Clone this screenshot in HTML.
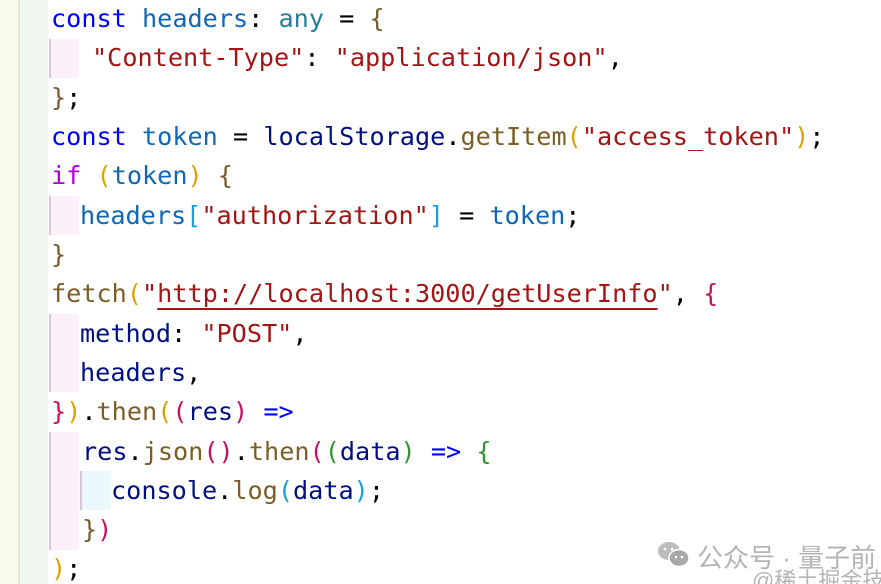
<!DOCTYPE html>
<html><head><meta charset="utf-8"><style>
html,body{margin:0;width:881px;height:584px;overflow:hidden;}
body{background:#fff;position:relative;font-family:"DejaVu Sans Mono","Liberation Mono",monospace;}
.ys{position:absolute;left:0;top:0;width:18px;height:584px;background:#fbfbeb}
.gs{position:absolute;left:18px;top:0;width:2px;height:584px;background:#dfe6da}
.gr{position:absolute;left:20px;top:0;width:28px;height:584px;background:#f0f8ef}
.box{position:absolute;border-left:2px solid #d6c6d6}
.l{position:absolute;left:51px;font-size:25.2px;line-height:39px;white-space:pre;color:#000;letter-spacing:0}
.k{color:#0000ff}.v{color:#0f67b5}.t{color:#267f99}.s{color:#a31515}.b{color:#7a5a2a}.n{color:#001080}.f{color:#795e26}.p{color:#af00db}.y{color:#e0a000}.m{color:#c8105e}.g{color:#319331}.c{color:#18a0e0}
.u{text-decoration:underline;text-decoration-color:#a31515;text-underline-offset:6px}
.wm{position:absolute;font-family:"Liberation Sans","Noto Sans CJK SC",sans-serif;color:#b4b4b4;white-space:nowrap}
</style></head><body>
<div class="ys"></div><div class="gs"></div><div class="gr"></div>
<div class="box" style="left:49px;top:39px;width:28px;height:39px;background:#fcf0fa"></div>
<div class="box" style="left:49px;top:196px;width:28px;height:39px;background:#fcf0fa"></div>
<div class="box" style="left:49px;top:314px;width:28px;height:78px;background:#fcf0fa"></div>
<div class="box" style="left:49px;top:432px;width:28px;height:118px;background:#fcf0fa"></div>
<div class="box" style="left:80px;top:471px;width:29px;height:39px;background:#eaf8fb"></div>
<div class="l" style="top:-1px"><span class="k">const</span> <span class="v">headers</span>: <span class="t">any</span> = <span class="b">{</span></div>
<div class="l" style="top:38px;left:92px"><span class="s">"Content-Type"</span>: <span class="s">"application/json"</span>,</div>
<div class="l" style="top:78px"><span class="b">}</span>;</div>
<div class="l" style="top:117px"><span class="k">const</span> <span class="v">token</span> = <span class="n">localStorage</span>.<span class="f">getItem</span><span class="y">(</span><span class="s">"access_token"</span><span class="y">)</span>;</div>
<div class="l" style="top:156px"><span class="p">if</span> <span class="y">(</span><span class="v">token</span><span class="y">)</span> <span class="b">{</span></div>
<div class="l" style="top:196px;left:80px"><span class="v">headers</span><span class="c">[</span><span class="s">"authorization"</span><span class="c">]</span> = <span class="v">token</span>;</div>
<div class="l" style="top:235px"><span class="b">}</span></div>
<div class="l" style="top:274px"><span class="f">fetch</span><span class="y">(</span><span class="s">"<span class="u">http://localhost:3000/getUserInfo</span>"</span>, <span class="m">{</span></div>
<div class="l" style="top:314px;left:80px"><span class="n">method</span>: <span class="s">"POST"</span>,</div>
<div class="l" style="top:353px;left:80px"><span class="n">headers</span>,</div>
<div class="l" style="top:392px"><span class="m">}</span><span class="y">)</span>.<span class="f">then</span><span class="y">(</span><span class="m">(</span><span class="n">res</span><span class="m">)</span> <span class="k">=&gt;</span></div>
<div class="l" style="top:432px;left:82px"><span class="n">res</span>.<span class="f">json</span><span class="m">()</span>.<span class="f">then</span><span class="m">(</span><span class="g">(</span><span class="n">data</span><span class="g">)</span> <span class="k">=&gt;</span> <span class="g">{</span></div>
<div class="l" style="top:471px;left:111px"><span class="n">console</span>.<span class="f">log</span><span class="c">(</span><span class="n">data</span><span class="c">)</span>;</div>
<div class="l" style="top:510px;left:82px"><span class="b">}</span><span class="m">)</span></div>
<div class="l" style="top:549px"><span class="y">)</span>;</div>
<svg style="position:absolute;left:656px;top:540px" width="36" height="30" viewBox="0 0 36 30"><ellipse cx="13" cy="11" rx="11" ry="9" fill="#bdbdbd"/><ellipse cx="23" cy="18" rx="10" ry="8.5" fill="#a8a8a8" stroke="#fff" stroke-width="1.5"/><circle cx="20" cy="17" r="1.3" fill="#fff"/><circle cx="26" cy="17" r="1.3" fill="#fff"/><circle cx="9" cy="9" r="1.3" fill="#fff"/><circle cx="16" cy="9" r="1.3" fill="#fff"/></svg>
<div class="wm" style="left:697px;top:538px;font-size:26px">公众号 · 量子前</div>
<div class="wm" style="left:752px;top:563px;font-size:22px">@稀土掘金技术</div>
</body></html>
